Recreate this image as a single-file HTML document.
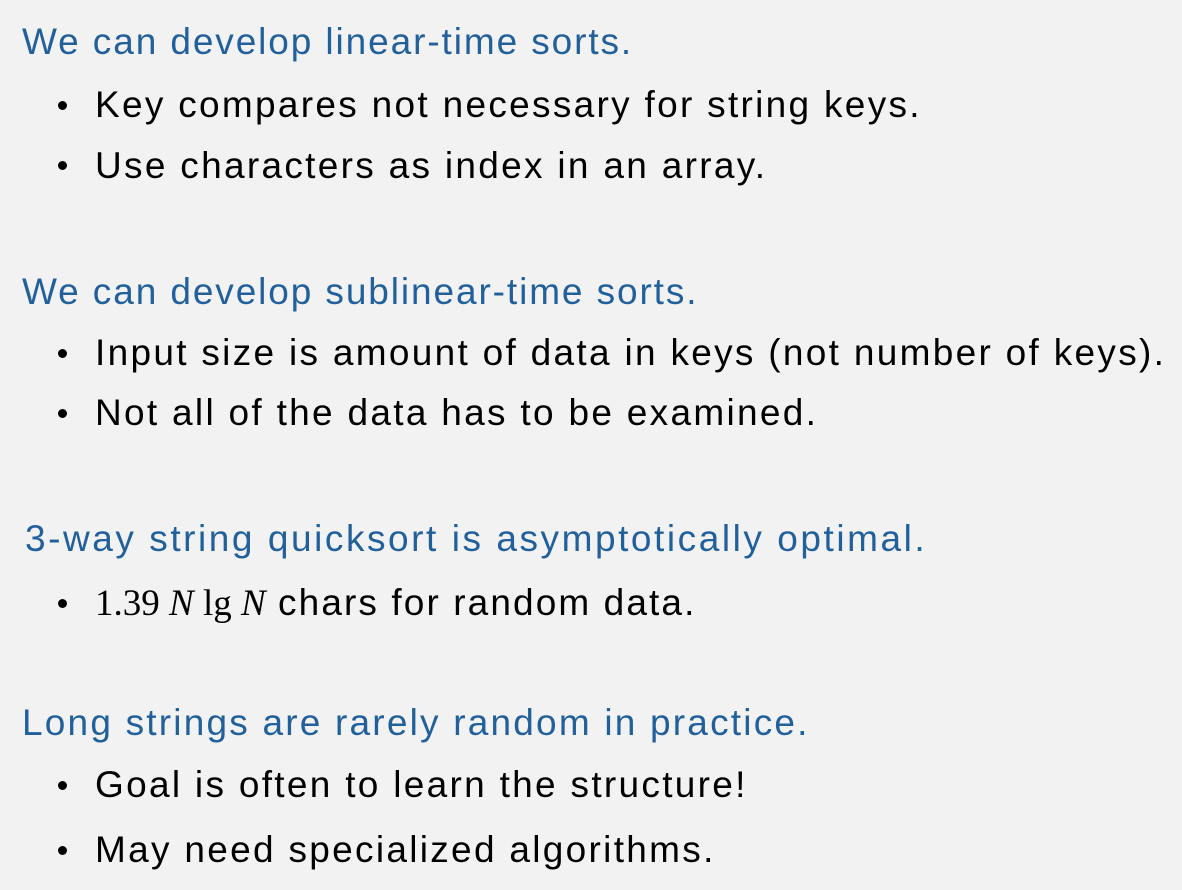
<!DOCTYPE html>
<html><head><meta charset="utf-8"><style>
html,body{margin:0;padding:0;}
body{width:1182px;height:890px;background:#f2f2f2;position:relative;overflow:hidden;font-family:"Liberation Sans",sans-serif;font-size:37px;}
.l{position:absolute;white-space:nowrap;line-height:37px;letter-spacing:2.3px;}
.h{color:#22609c;left:22px;letter-spacing:1.9px;}
.b{color:#000;left:95px;}
.d{position:absolute;width:9px;height:9px;border-radius:50%;background:#000;left:58px;}
.m{font-family:"Liberation Serif",serif;letter-spacing:0;}
</style></head><body>
<div class="l h" style="top:23px">We can develop linear-time sorts.</div>
<div class="d" style="top:101px"></div><div class="l b" style="top:86px">Key compares not necessary for string keys.</div>
<div class="d" style="top:161px"></div><div class="l b" style="top:147px">Use characters as index in an array.</div>

<div class="l h" style="top:273px">We can develop sublinear-time sorts.</div>
<div class="d" style="top:349px"></div><div class="l b" style="top:334px">Input size is amount of data in keys (not number of keys).</div>
<div class="d" style="top:409px"></div><div class="l b" style="top:394px">Not all of the data has to be examined.</div>

<div class="l h" style="top:520px;left:25px;letter-spacing:2.55px">3-way string quicksort is asymptotically optimal.</div>
<div class="d" style="top:599px"></div><div class="l b" style="top:584px;letter-spacing:2.1px"><span class="m">1.39 <i>N</i> lg <i>N</i></span> chars for random data.</div>

<div class="l h" style="top:704px;letter-spacing:2.2px">Long strings are rarely random in practice.</div>
<div class="d" style="top:781px"></div><div class="l b" style="top:766px">Goal is often to learn the structure!</div>
<div class="d" style="top:846px"></div><div class="l b" style="top:831px">May need specialized algorithms.</div>
</body></html>
